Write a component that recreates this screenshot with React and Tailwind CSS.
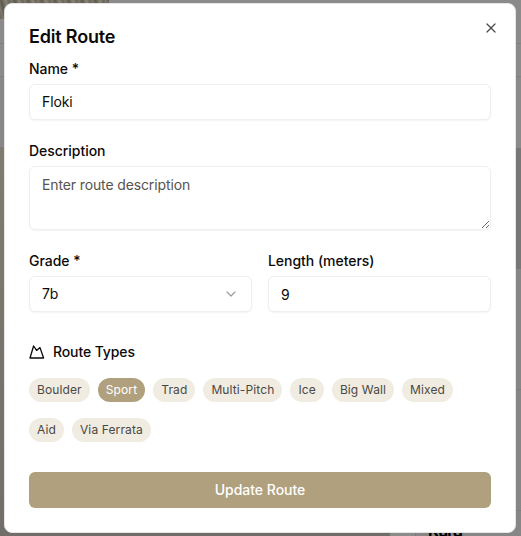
import { X, ChevronDown } from "lucide-react";

const types = ["Boulder", "Sport", "Trad", "Multi-Pitch", "Ice", "Big Wall", "Mixed", "Aid", "Via Ferrata"];
const field = "shrink-0 rounded-md border border-[#efefed] bg-white px-3 text-sm tracking-[-0.009em] shadow-xs outline-none";
const label = "text-sm font-medium leading-[14px] tracking-[-0.003em]";

function Backdrop() {
  return (
    <div className="flex h-[536px] w-[521px] flex-col overflow-hidden bg-[#8b8b8b]">
      <div className="h-[19px] w-[109px] shrink-0 bg-[repeating-linear-gradient(75deg,#69645a_0px,#7d776c_3px,#5c5a50_6px,#8b8375_10px,#6f6c63_13px)]" />
      <div className="h-[25px] shrink-0 border-b border-[#808080]" />
      <div className="h-[33px] shrink-0 border-b border-[#808080]" />
      <div className="flex h-[459px] shrink-0">
        <div className="flex w-[390px] flex-col">
          <div className="h-[70px] bg-[#88888a]" />
          <div className="grow bg-gradient-to-b from-[#807b71] to-[#716e69]" />
        </div>
        <div className="flex w-[131px] flex-col">
          <div className="h-[71px] bg-[#8a8a8a]" />
          <div className="h-[121px] bg-[#777777]" />
          <div className="h-[121px] border-b border-[#7c7c7c] bg-[#868686]" />
          <div className="h-[121px] border-b border-[#7c7c7c] bg-[#868686]" />
          <div className="ml-[25px] h-[25px] border-l border-[#7c7c7c] bg-[#868686] pl-[12px] pt-[8px] font-['Inter'] text-base font-bold leading-6 tracking-[-0.05em] text-black">Kurd</div>
        </div>
      </div>
    </div>
  );
}

export default function App() {
  return (
    <div className="relative h-[536px] w-[521px] overflow-hidden font-['Inter',sans-serif] text-[#0c0a09]">
      <Backdrop />
      <div className="absolute left-1 top-[3px] flex h-[530px] w-[512px] flex-col rounded-lg border border-[#e7e5e4] bg-white p-6">
        <button className="absolute right-4 top-4 flex size-4 items-center justify-center text-[#4c4a48]"><X size={16} strokeWidth={1.8} /></button>
        <h2 className="text-lg font-semibold leading-[18px] tracking-[-0.01em]">Edit Route</h2>
        <label className={`${label} mt-4`}>Name *</label>
        <input className={`${field} mt-2 h-9 pb-0.5`} defaultValue="Floki" />
        <label className={`${label} mt-6`}>Description</label>
        <textarea className={`${field} mt-2 h-16 resize-y py-2 placeholder:text-[#57534e]`} placeholder="Enter route description" />
        <div className="mt-6 grid grid-cols-2 gap-4">
          <div className="flex flex-col">
            <label className={label}>Grade *</label>
            <button className={`${field} mt-2 flex h-9 items-center justify-between`}>7b<ChevronDown size={16} strokeWidth={1.8} className="opacity-40" /></button>
          </div>
          <div className="flex flex-col">
            <label className={label}>Length (meters)</label>
            <input className={`${field} mt-2 h-9`} defaultValue="9" />
          </div>
        </div>
        <div className="mt-[30px] flex h-5 items-center gap-2 text-sm font-medium tracking-[-0.008em]">
          <svg width="16" height="16" viewBox="0 0 16 16" fill="none" stroke="currentColor" strokeWidth="1.3" strokeLinejoin="round"><path d="M1 14 4.6 2 7.6 6.4 11 3.6 14.6 14Z" /></svg>
          Route Types
        </div>
        <div className="mt-4 flex flex-wrap gap-x-2 gap-y-4">
          {types.map((t) => (
            <span key={t} className={`flex h-6 items-center rounded-full px-2 text-xs tracking-[0.01em] ${t === "Sport" ? "bg-[#b1a07e] text-white" : "bg-[#f0ece1] text-[#4a4845]"}`}>{t}</span>
          ))}
        </div>
        <button className="mt-[30px] h-9 shrink-0 rounded-md bg-[#b1a07e] text-sm font-medium tracking-[-0.001em] text-white">Update Route</button>
      </div>
    </div>
  );
}
